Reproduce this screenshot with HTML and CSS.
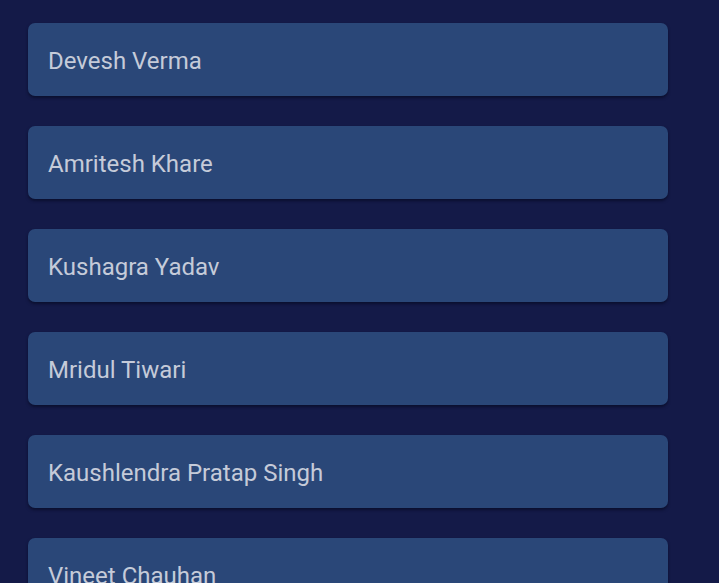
FILE: index.html
```html
<!DOCTYPE html>
<html>
<head>
<meta charset="utf-8">
<link rel="stylesheet" href="styles.css">
</head>
<body>
<div class="list">
  <div class="card">Devesh Verma</div>
  <div class="card">Amritesh Khare</div>
  <div class="card">Kushagra Yadav</div>
  <div class="card">Mridul Tiwari</div>
  <div class="card">Kaushlendra Pratap Singh</div>
  <div class="card">Vineet Chauhan</div>
</div>
</body>
</html>
```
FILE: styles.css
```css
html, body {
  margin: 0;
  padding: 0;
  background: #141a48;
  height: 100%;
  overflow: hidden;
}
.list {
  display: flex;
  flex-direction: column;
  gap: 30px;
  padding: 23px 0 0 28px;
  width: 640px;
}
.card {
  height: 73px;
  flex-shrink: 0;
  box-sizing: border-box;
  display: flex;
  align-items: center;
  padding: 3px 0 0 20px;
  background: #2a4778;
  border-radius: 7px;
  box-shadow: 0 2px 3px rgba(5, 8, 30, 0.6);
  color: #c5cbd9;
  font-family: Roboto, "Noto Sans", sans-serif;
  font-size: 24px;
}
```
